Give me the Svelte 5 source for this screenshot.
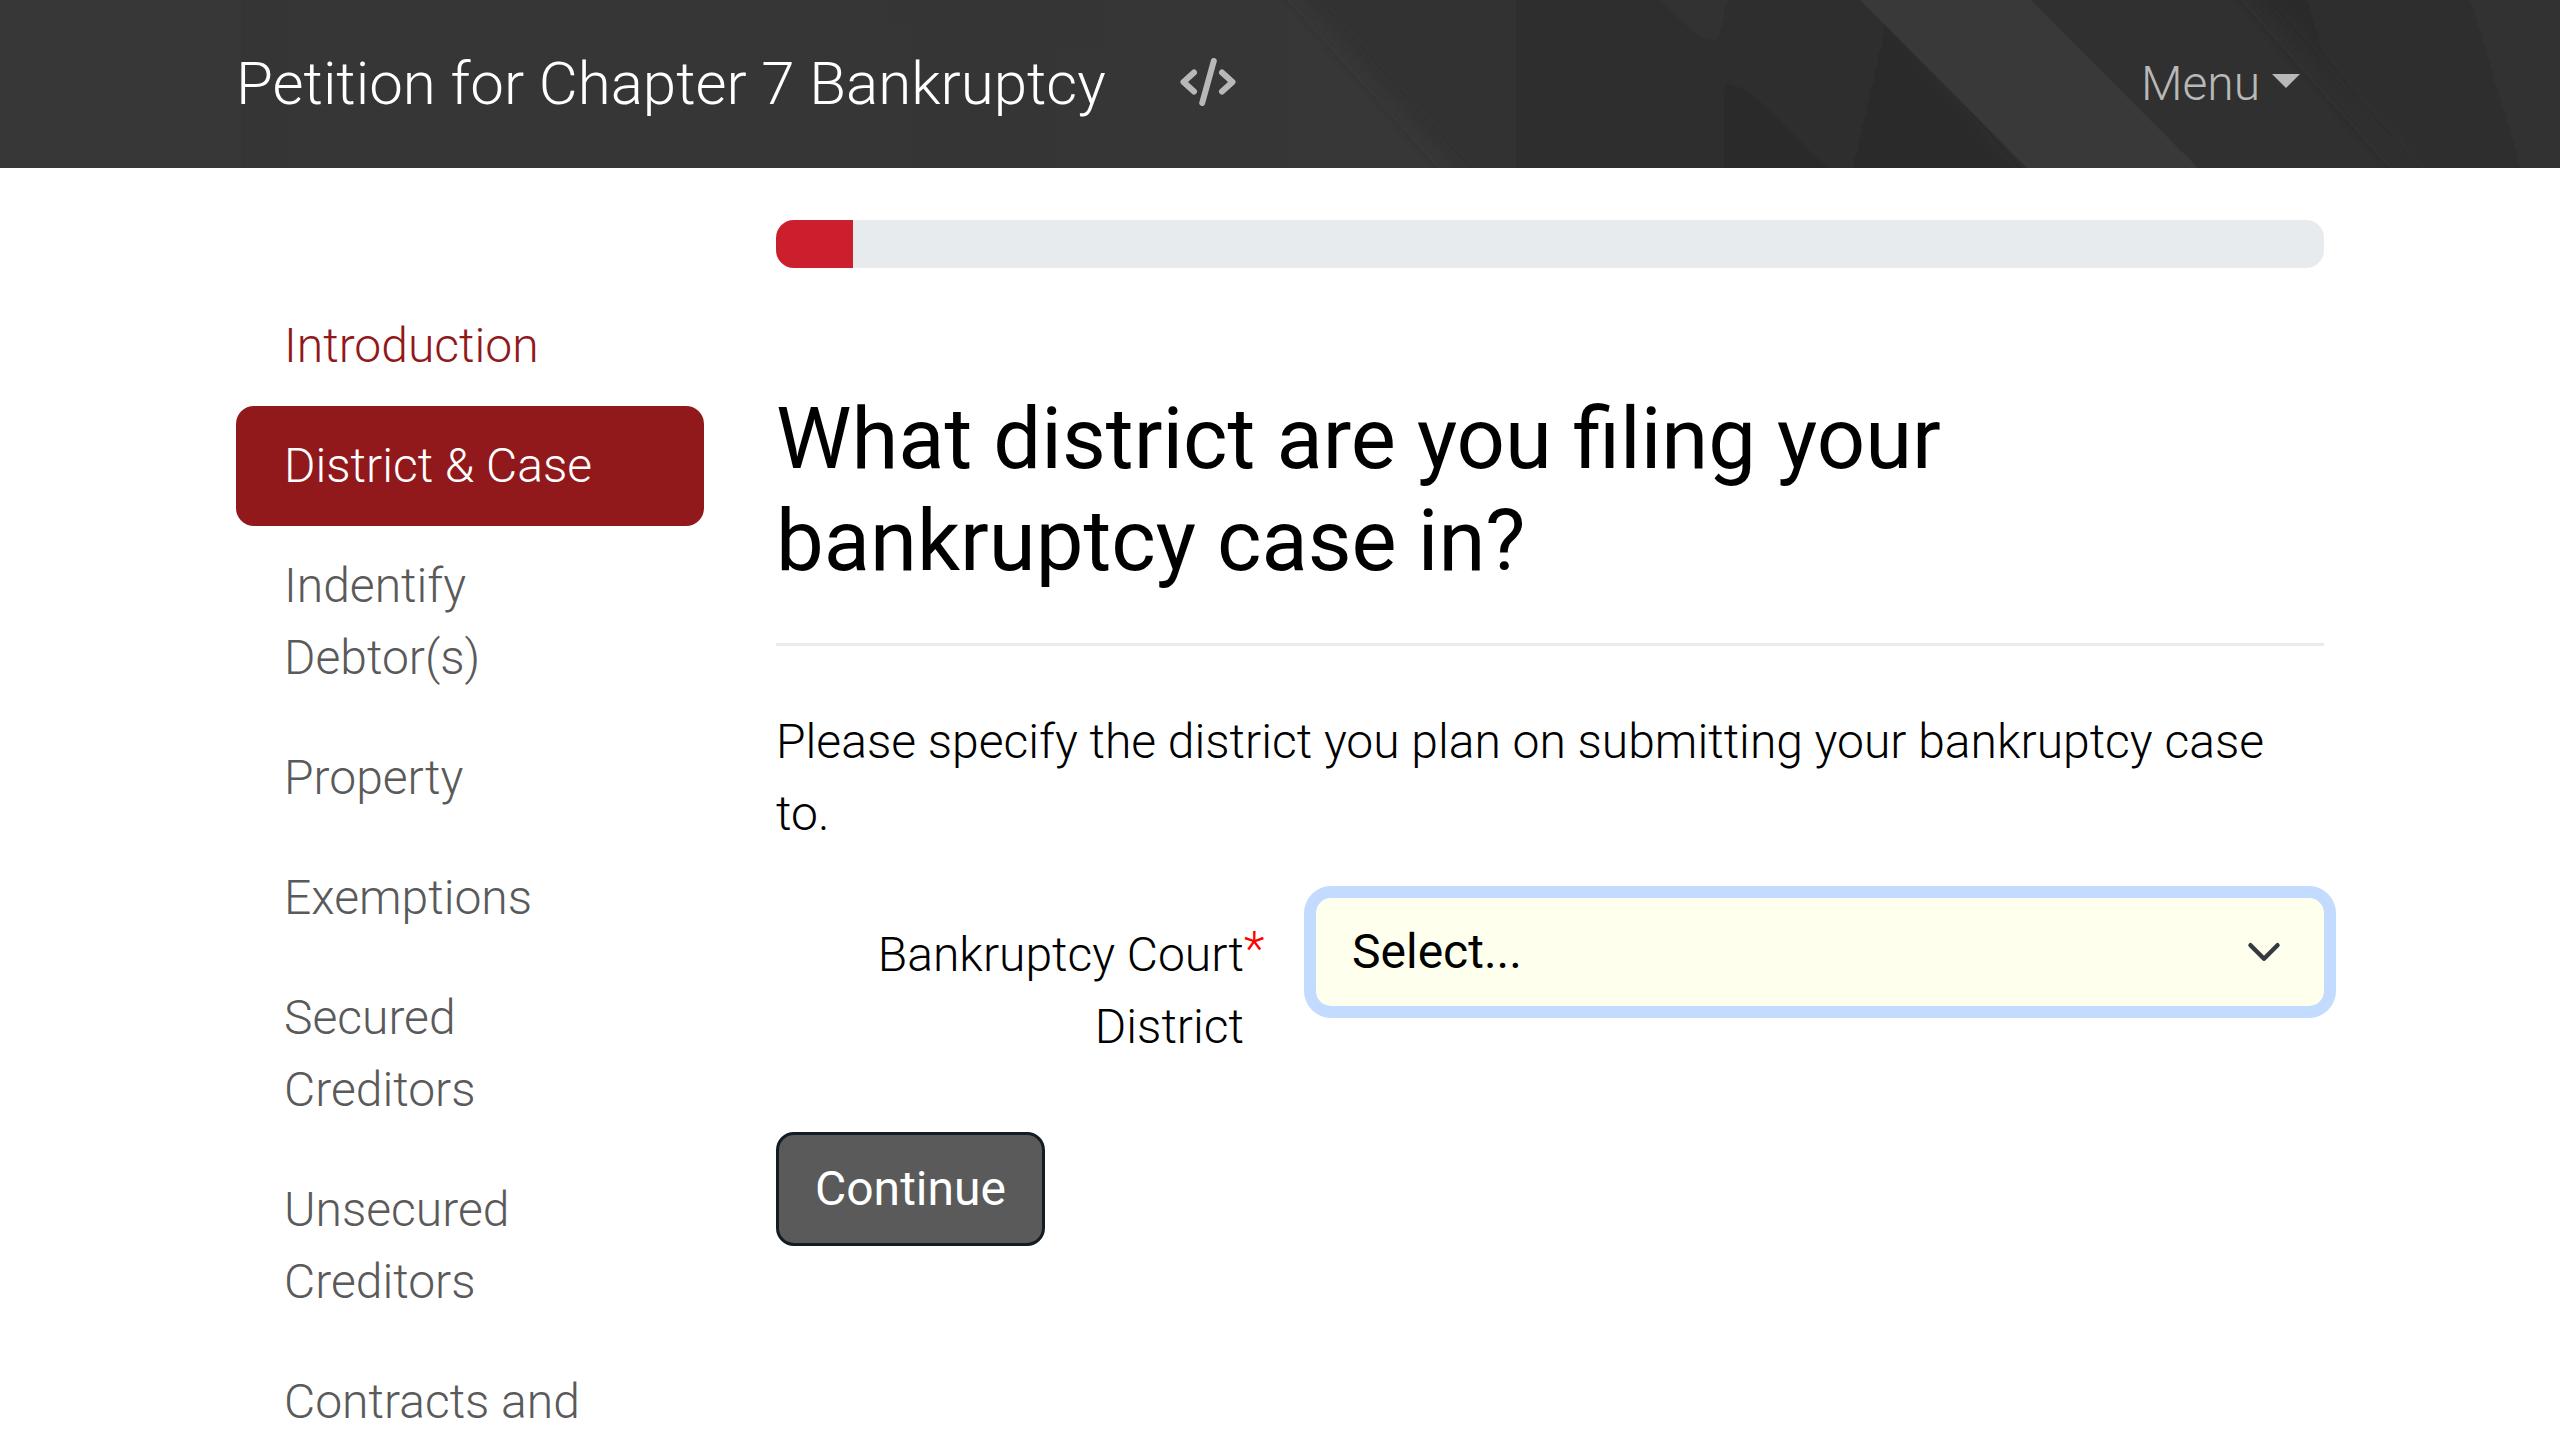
<script>
  const sections = [
    { label: 'Introduction', state: 'visited' },
    { label: 'District & Case', state: 'active' },
    { label: 'Indentify Debtor(s)' },
    { label: 'Property' },
    { label: 'Exemptions' },
    { label: 'Secured Creditors' },
    { label: 'Unsecured Creditors' },
    { label: 'Contracts and' }
  ];
  const progress = 5;
</script>

<header class="navbar">
  <svg class="texture" viewBox="0 0 2560 168" preserveAspectRatio="none" aria-hidden="true">
    <defs>
      <linearGradient id="shadeA" gradientUnits="userSpaceOnUse" x1="1340" y1="0" x2="1760" y2="0">
        <stop offset="0" stop-color="#323232" />
        <stop offset="1" stop-color="#2c2c2c" />
      </linearGradient>
      <linearGradient id="shadeB" gradientUnits="userSpaceOnUse" x1="1700" y1="0" x2="1960" y2="60">
        <stop offset="0" stop-color="#303030" />
        <stop offset="1" stop-color="#2b2b2b" />
      </linearGradient>
      <linearGradient id="shadeC" gradientUnits="userSpaceOnUse" x1="2280" y1="0" x2="2480" y2="-60">
        <stop offset="0" stop-color="#2c2c2c" />
        <stop offset="1" stop-color="#303030" />
      </linearGradient>
      <filter id="soft" x="-10%" y="-40%" width="120%" height="180%">
        <feGaussianBlur stdDeviation="9" />
      </filter>
    </defs>
    <rect width="2560" height="168" fill="#373737" />
    <rect x="241" width="47" height="168" fill="#353535" />
    <rect x="288" width="1000" height="168" fill="#363636" />
    <path d="M888 0H1104V49H1056V168H912V24H888Z" fill="#353535" />
    <g filter="url(#soft)">
      <path d="M1277 -30H1900V198H1482Z" fill="url(#shadeA)" />
      <path d="M1630 -30H1860L2060 198H1857Z" fill="url(#shadeB)" />
    </g>
    <path d="M2000 0H2560V168H2100Z" fill="#303030" />
    <path d="M2229 -30H2640V198H2432Z" fill="url(#shadeC)" filter="url(#soft)" />
    <path d="M1860 0H2031L2198 168H2027Z" fill="#393939" />
  </svg>
  <div class="container bar">
    <a class="brand" href="#top">Petition for Chapter 7 Bankruptcy</a>
    <button class="nav-link source" type="button" aria-label="Source">
      <svg viewBox="0 0 60 48" aria-hidden="true">
        <path d="M16 14.500L5.500 24L16 33.500M44 14.500L54.500 24L44 33.500M35.800 3L24.200 45" />
      </svg>
    </button>
    <button class="nav-link menu" type="button">Menu<span class="caret"></span></button>
  </div>
</header>

<div class="container page">
  <nav class="sections" aria-label="Sections">
    {#each sections as section}
      <a href="#section" class={section.state ?? 'upcoming'}>{section.label}</a>
    {/each}
  </nav>

  <main>
    <div class="progress" role="progressbar" aria-label="Progress" aria-valuenow={progress} aria-valuemin="0" aria-valuemax="100">
      <div class="progress-fill" style:width="{progress}%"></div>
    </div>
    <h1>What district are you filing your bankruptcy case in?</h1>
    <hr />
    <p>Please specify the district you plan on submitting your bankruptcy case to.</p>
    <form>
      <div class="field">
        <label for="district">Bankruptcy Court District</label>
        <div class="select-wrap">
          <select id="district" required>
            <option value="">Select...</option>
          </select>
          <svg class="chevron" viewBox="0 0 16 16" aria-hidden="true"><path d="m2 5 6 6 6-6" /></svg>
        </div>
      </div>
      <button class="continue" type="button">Continue</button>
    </form>
  </main>
</div>

<style>
  :global(body) {
    margin: 0;
    background: #fff;
    color: #000;
    font-family: Roboto, sans-serif;
    font-size: 48px;
    font-weight: 300;
    line-height: 72px;
  }

  .container {
    box-sizing: border-box;
    width: 100%;
    max-width: 2160px;
    margin: 0 auto;
    padding: 0 36px;
  }

  .navbar {
    display: grid;
    background: #373737;
  }

  .texture,
  .bar {
    grid-area: 1 / 1;
  }

  .texture {
    width: 100%;
    height: 100%;
  }

  .bar {
    display: flex;
    align-items: center;
    height: 168px;
    z-index: 1;
  }

  .brand {
    margin-right: 48px;
    color: #fff;
    font-size: 60px;
    line-height: 90px;
    text-decoration: none;
  }

  .nav-link {
    display: flex;
    align-items: center;
    padding: 24px;
    border: 0;
    background: none;
    color: #b8b8b8;
    font: inherit;
  }

  .source svg {
    width: 60px;
    height: 48px;
    margin-bottom: 4px;
    fill: none;
    stroke: currentColor;
    stroke-width: 6;
    stroke-linecap: round;
    stroke-linejoin: round;
  }

  .menu {
    margin-left: auto;
  }

  .caret {
    margin: 0 0 6px 12px;
    border: 14px solid transparent;
    border-top-color: currentColor;
    border-bottom: 0;
  }

  .page {
    display: grid;
    grid-template-columns: 468px minmax(0, 1fr);
    column-gap: 72px;
  }

  .sections {
    display: flex;
    flex-direction: column;
    padding-top: 118px;
  }

  .sections a {
    padding: 24px 48px;
    border-radius: 18px;
    color: #5a5a5a;
    text-decoration: none;
  }

  .sections .visited {
    color: #91191c;
  }

  .sections .active {
    background: #91191c;
    color: #fff;
  }

  main {
    padding-top: 52px;
  }

  .progress {
    height: 48px;
    overflow: hidden;
    border-radius: 18px;
    background: #e8ebee;
  }

  .progress-fill {
    height: 100%;
    background: #cc1f2d;
  }

  h1 {
    margin: 120px 0 0;
    font-size: 85px;
    font-weight: 400;
    line-height: 102px;
  }

  hr {
    height: 3px;
    margin: 51px 0 60px;
    border: 0;
    background: #ebebeb;
  }

  p {
    margin: 0 0 48px;
  }

  .field {
    display: grid;
    grid-template-columns: 468px minmax(0, 1fr);
    column-gap: 72px;
    align-items: start;
  }

  label {
    position: relative;
    padding-top: 21px;
    text-align: right;
  }

  label::after {
    content: '*';
    position: absolute;
    top: 15px;
    left: 100%;
    color: #f00;
  }

  .select-wrap {
    display: grid;
    align-items: center;
  }

  select,
  .chevron {
    grid-area: 1 / 1;
  }

  select {
    width: 100%;
    height: 108px;
    padding: 0 108px 0 36px;
    border: 0;
    border-radius: 15px;
    outline: 0;
    appearance: none;
    background: #ffffee;
    box-shadow: 0 0 0 12px #c2dbfe;
    color: #000;
    font: inherit;
    font-weight: 400;
  }

  .chevron {
    justify-self: end;
    width: 36px;
    height: 36px;
    margin-right: 42px;
    fill: none;
    stroke: #343a40;
    stroke-width: 2;
    stroke-linecap: round;
    stroke-linejoin: round;
    pointer-events: none;
  }

  .continue {
    margin-top: 69px;
    padding: 18px 36px;
    border: 3px solid #111c24;
    border-radius: 18px;
    background: #5a5a5a;
    color: #fff;
    font: inherit;
    font-weight: 400;
  }
</style>
